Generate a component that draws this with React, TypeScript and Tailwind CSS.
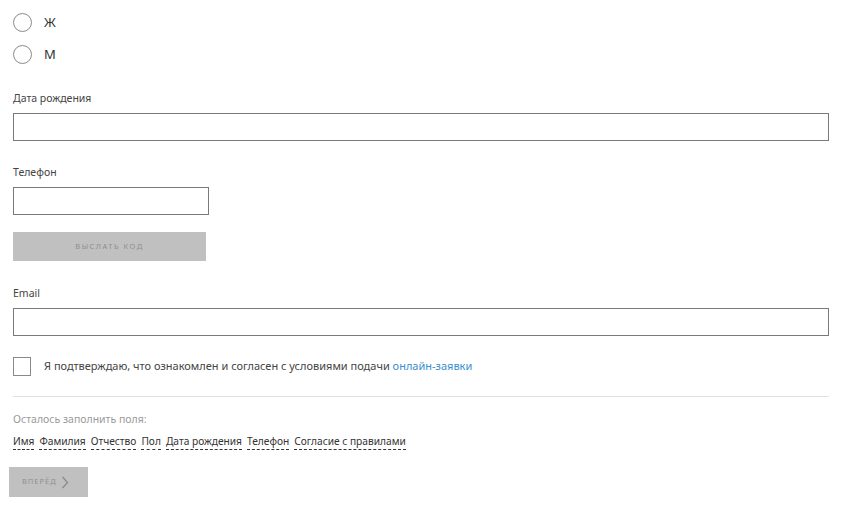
import React from "react";

const font = { fontFamily: '"Noto Sans", "Liberation Sans", sans-serif' };

function Radio({ label, className }: { label: string; className?: string }) {
  return (
    <div className={"flex items-center h-[19px] " + (className || "")}>
      <span className="w-[19px] h-[19px] rounded-full border border-[#8a8a8a] bg-white shrink-0" />
      <span className="ml-[12px] text-[13px] text-[#333]">{label}</span>
    </div>
  );
}

function Field({ label, w }: { label: string; w: string }) {
  return (
    <div className="flex flex-col">
      <div className="text-[10.5px] leading-[14px] text-[#444]">{label}</div>
      <div className={"mt-[8px] h-[28px] border border-[#7a7a7a] bg-white " + w} />
    </div>
  );
}

const missing = ["Имя", "Фамилия", "Отчество", "Пол", "Дата рождения", "Телефон", "Согласие с правилами"];

export default function App() {
  return (
    <div className="w-[857px] h-[524px] bg-white overflow-hidden" style={font}>
      <div className="pl-[13px] pr-[28px] pt-[13px]">
        <Radio label="Ж" />
        <Radio label="М" className="mt-[13px]" />

        <div className="mt-[27px]">
          <Field label="Дата рождения" w="w-[816px]" />
        </div>

        <div className="mt-[24px]">
          <Field label="Телефон" w="w-[196px]" />
        </div>

        <button className="mt-[17px] w-[193px] h-[29px] bg-[#c0c0c0] text-[7.5px] tracking-[1.5px] text-[#8f8f8f] uppercase flex items-center justify-center">
          Выслать код
        </button>

        <div className="mt-[25px]">
          <Field label="Email" w="w-[816px]" />
        </div>

        <div className="mt-[21px] flex items-center h-[19px]">
          <span className="w-[18px] h-[19px] border border-[#8a8a8a] bg-white shrink-0" />
          <span className="ml-[13px] text-[11px] text-[#444]">
            Я подтверждаю, что ознакомлен и согласен с условиями подачи{" "}
            <a className="text-[#3a8fcf]">онлайн-заявки</a>
          </span>
        </div>

        <div className="mt-[20px] w-[816px] border-t border-[#e2e2e2]" />

        <div className="mt-[15px] text-[10.5px] leading-[14px] text-[#9a9a9a]">Осталось заполнить поля:</div>
        <div className="mt-[8px] flex gap-[5px] text-[10.2px] leading-[14px] text-[#333]">
          {missing.map((m) => (
            <span key={m} className="border-b border-dashed border-[#333] pb-[1px]">
              {m}
            </span>
          ))}
        </div>
      </div>
      <button className="ml-[9px] mt-[17px] w-[79px] h-[30px] bg-[#c0c0c0] flex items-center pl-[13px] gap-[4px] text-[#8f8f8f]">
        <span className="text-[7.5px] tracking-[1px] uppercase">Вперёд</span>
        <svg width="8" height="13" viewBox="0 0 8 13" fill="none">
          <path d="M1.5 1 L6.5 6.5 L1.5 12" stroke="#8a8a8a" strokeWidth="1.3" />
        </svg>
      </button>
    </div>
  );
}
